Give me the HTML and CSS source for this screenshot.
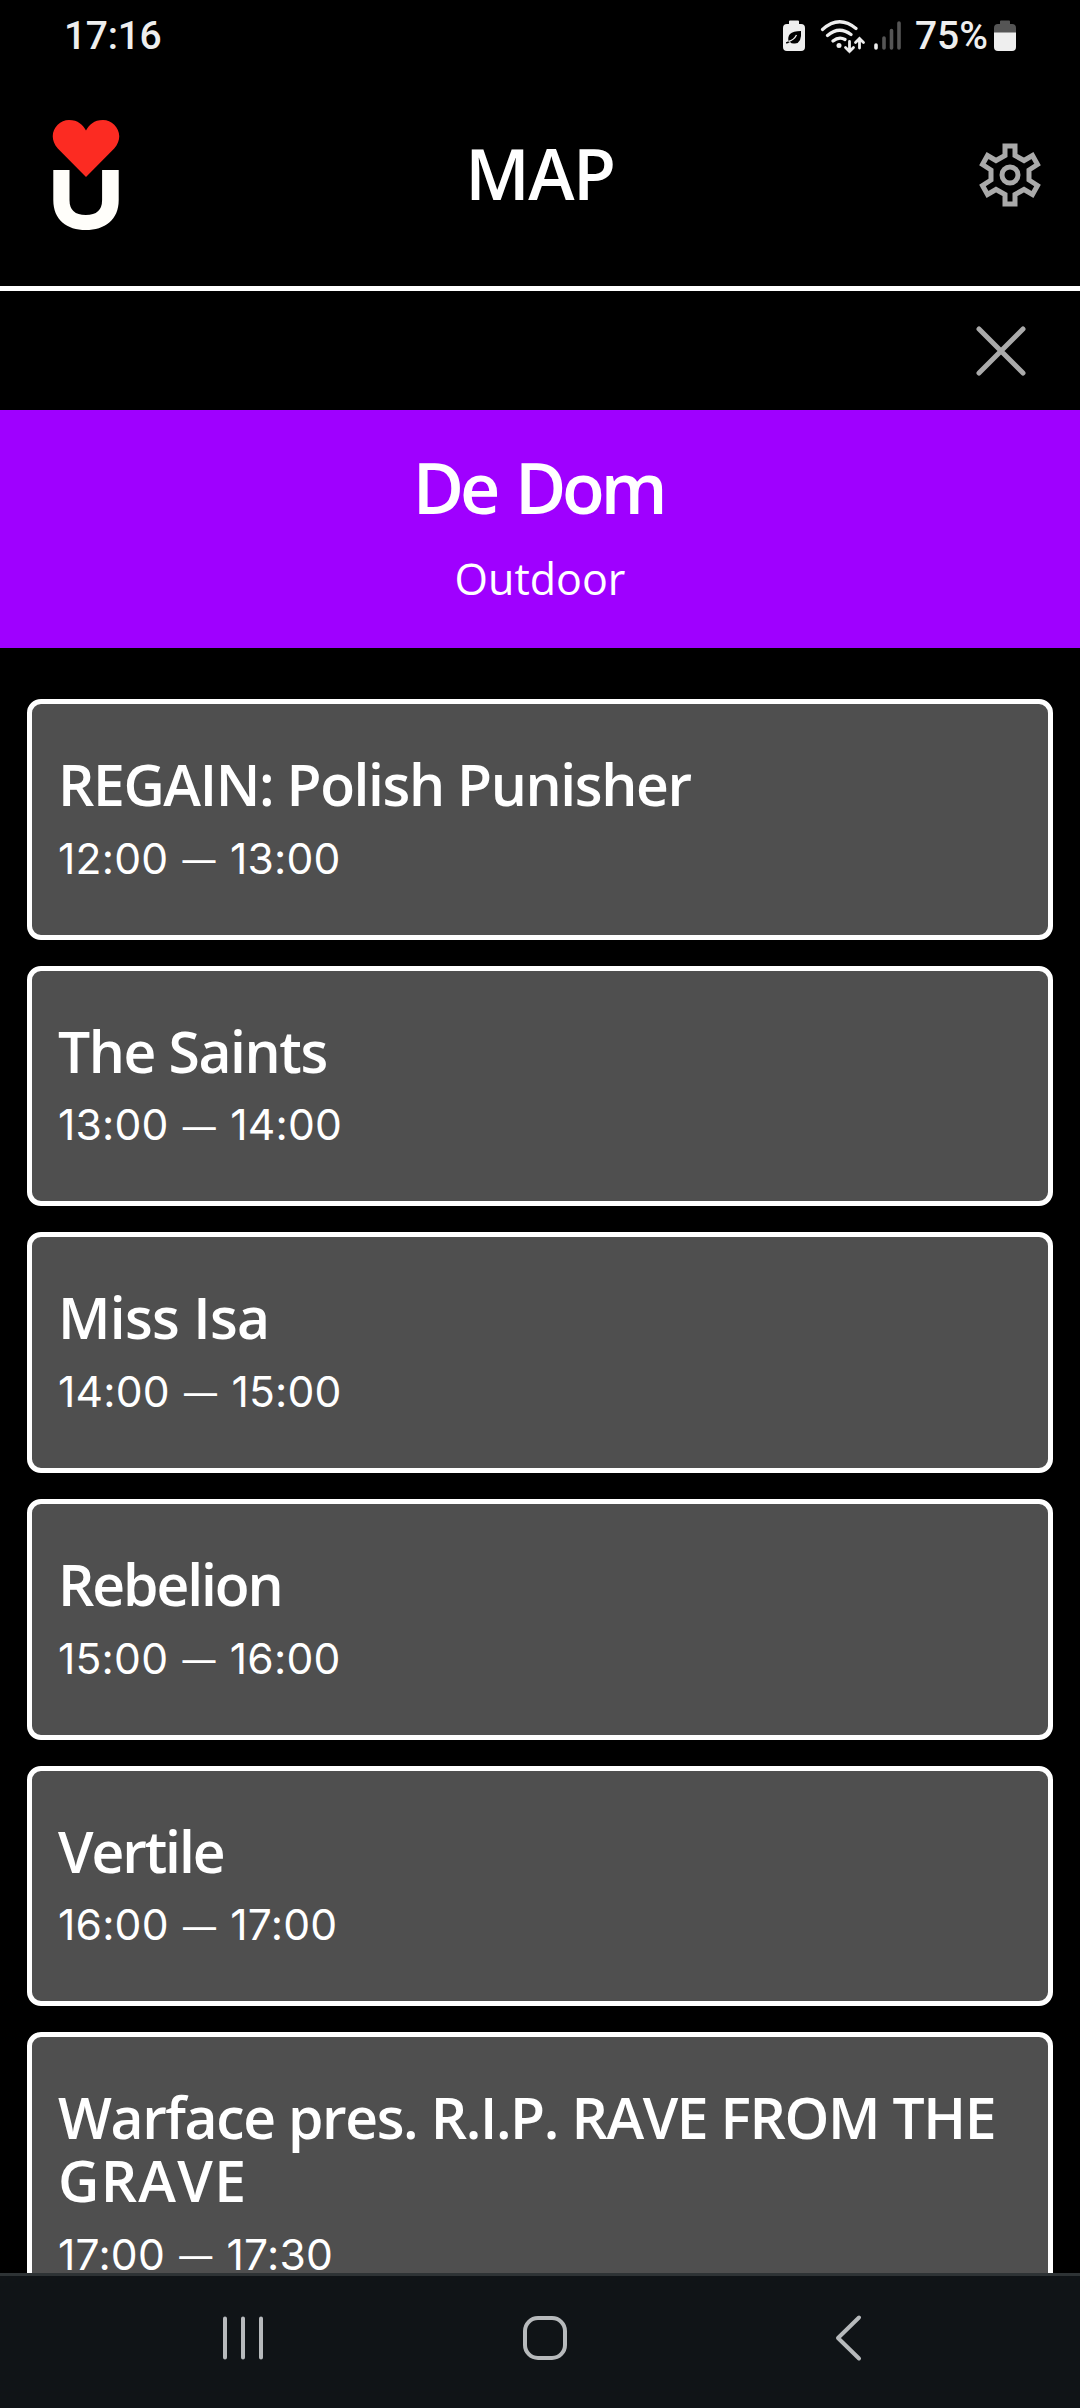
FILE: index.html
```html
<!DOCTYPE html>
<html lang="en">
<head>
<meta charset="utf-8">
<title>Map</title>
<link rel="stylesheet" href="styles.css">
</head>
<body>
<div class="screen">
  <div class="status">
    <span class="clock">17:16</span>
    <div class="status-icons">
      <svg class="saver" width="22" height="32" viewBox="0 0 22 32"><path fill="#eee" d="M6 1.5Q6 .5 7 .5h8q1 0 1 1V4h2q4 0 4 4v19q0 4-4 4H4q-4 0-4-4V8q0-4 4-4h2z"/><path fill="#000" d="M18 11q1 12-6 12.500-3.500.5-5-1.500-2 1.500-4 1.500v-1.300q1.500-.2 2.500-1.200Q4.500 17 7 14q3-3 11-3z"/><path stroke="#eee" stroke-width="1.300" fill="none" d="M5.500 21.500Q11 20 13.500 15"/></svg>
      <svg class="wifi" width="46" height="36" viewBox="0 0 46 36"><g fill="none" stroke="#eee" stroke-width="3.200" stroke-linecap="round"><path d="M2.500 11.500Q19-3.500 36 10.500M7.500 17.500Q19 7.500 31 16.500M13 23Q19 18 25 21.500"/><path stroke-width="2.800" d="M29.500 23.500v10M25.500 29.500l4 4 4-4M39.500 30v-9.500M35.500 24.500l4-4 4 4"/></g><circle cx="19" cy="27.500" r="2.500" fill="#eee"/></svg>
      <svg class="signal" width="27" height="30" viewBox="0 0 27 30"><g stroke-width="3.600" stroke-linecap="round"><path stroke="#eee" d="M2 24v3"/><path stroke="#555" d="M10 17v10M17.500 9.500V27M25 2v25"/></g></svg>
      <span class="percent">75%</span>
      <svg class="battery" width="22" height="32" viewBox="0 0 22 32"><path fill="#555" d="M6 1.500Q6 .5 7 .5h8q1 0 1 1V4h2q4 0 4 4v5H0V8q0-4 4-4h2z"/><path fill="#eee" d="M0 12.500h22V27q0 4-4 4H4q-4 0-4-4z"/></svg>
    </div>
  </div>
  <header class="header">
    <svg class="logo" width="68" height="112" viewBox="0 0 68 112"><path fill="#fffefa" d="M1.300 51h16.200v30q0 15 16.300 15t16.300-15V51h16.600v30c0 20-14 30-32.900 30S1.300 101 1.300 81z"/><path fill="#fc2b22" d="M34 58 5.800 29.500C-6 16 5 1 17 1 26 1 31 6 34 11.500 37 6 42 1 51 1 63 1 74 16 62.200 29.500z"/></svg>
    <h1 class="title">MAP</h1>
    <svg class="gear" width="64" height="66" viewBox="-32 -33 64 66"><g fill="none" stroke="#aaa" stroke-width="5"><circle r="8"/><path d="M-5-29H5V-19.500L14-14.500 22.500-19.500 27.500-10.500 19-5V5L27.500 10.500 22.500 19.500 14 14.500 5 19.500V29H-5V19.500L-14 14.500-22.500 19.500-27.500 10.500-19 5V-5L-27.500-10.500-22.500-19.500-14-14.500-5-19.500z"/></g></svg>
  </header>
  <div class="closebar">
    <svg width="50" height="50" viewBox="0 0 50 50"><path stroke="#aaa" stroke-width="5" stroke-linecap="round" d="M3 3l44 44M47 3 3 47"/></svg>
  </div>
  <section class="stage">
    <h2 class="stage-name">De Dom</h2>
    <p class="stage-place">Outdoor</p>
  </section>
  <main class="list">
    <article class="card"><h3 class="act">REGAIN: Polish Punisher</h3><p class="time">12:00 <span class="dash">—</span> 13:00</p></article>
    <article class="card"><h3 class="act">The Saints</h3><p class="time">13:00 <span class="dash">—</span> 14:00</p></article>
    <article class="card"><h3 class="act loose">Miss Isa</h3><p class="time">14:00 <span class="dash">—</span> 15:00</p></article>
    <article class="card"><h3 class="act tight">Rebelion</h3><p class="time">15:00 <span class="dash">—</span> 16:00</p></article>
    <article class="card"><h3 class="act tight">Vertile</h3><p class="time">16:00 <span class="dash">—</span> 17:00</p></article>
    <article class="card"><h3 class="act">Warface pres. R.I.P. RAVE FROM THE <span class="wide">GRAVE</span></h3><p class="time">17:00 <span class="dash">—</span> 17:30</p></article>
  </main>
  <nav class="nav">
    <svg class="recents" width="42" height="46" viewBox="0 0 42 46"><path stroke="#b7babc" stroke-width="4" stroke-linecap="round" d="M3 3.500v39M21 3.500v39M39 3.500v39"/></svg>
    <svg class="home" width="46" height="46" viewBox="0 0 46 46"><rect x="3" y="3" width="40" height="40" rx="13" fill="none" stroke="#b7babc" stroke-width="4"/></svg>
    <svg class="back" width="28" height="48" viewBox="0 0 28 48"><path fill="none" stroke="#b7babc" stroke-width="4" stroke-linecap="round" stroke-linejoin="round" d="M25 3.500 4 24l21 20.500"/></svg>
  </nav>
</div>
</body>
</html>
```

FILE: styles.css
```css
* { box-sizing: border-box; }
body { margin: 0; background: #000; }
h1, h2, h3, p { margin: 0; }
svg { display: block; flex: none; }
.screen { width: 1080px; height: 2408px; overflow: hidden; display: flex; flex-direction: column; background: #000; color: #fff; font-family: "Open Sans", "Noto Sans", sans-serif; }
.status { flex: none; height: 72px; padding: 0 64px; display: flex; justify-content: space-between; align-items: center; color: #eee; font: 500 39px/70px Roboto, sans-serif; }
.clock { letter-spacing: -0.3px; }
.status-icons { display: flex; align-items: center; }
.wifi { margin-left: 15px; }
.signal { margin-left: 8px; }
.percent { margin-left: 14px; margin-right: 6px; }
.header { flex: none; height: 219px; border-bottom: 5px solid #fff; padding: 0 38px 8px; display: grid; grid-template-columns: 1fr auto 1fr; align-items: center; }
.logo { margin-left: 14px; }
.gear { justify-self: end; }
.title, .stage-name { font-weight: 650; font-size: 70px; line-height: 80px; }
.title { letter-spacing: -1.500px; padding-bottom: 4px; }
.closebar { flex: none; height: 119px; padding: 0 54px; display: flex; justify-content: flex-end; align-items: center; }
.stage { flex: none; height: 238px; background: #9f00ff; padding-top: 37px; text-align: center; }
.stage-name { letter-spacing: -4.200px; word-spacing: 5px; padding-right: 4px; }
.stage-place { font-size: 43px; line-height: 60px; margin-top: 22px; }
.list { flex: 1; min-height: 0; overflow: hidden; padding: 51px 27px 0; display: flex; flex-direction: column; gap: 26px; }
.card { flex: none; min-height: 240.700px; background: #4f4f4f; border: 5px solid #fff; border-radius: 14px; padding: 49px 26px; }
.act { font-size: 57px; line-height: 63px; font-weight: 650; letter-spacing: -1.400px; }
.loose { letter-spacing: -0.700px; }
.tight { letter-spacing: -2.100px; }
.wide { letter-spacing: 1.300px; }
.time { font-family: Inter, sans-serif; font-size: 42.600px; line-height: 50px; margin-top: 17.500px; letter-spacing: 0.200px; }
.dash { font-size: 33px; line-height: 1; margin: 0 2px; vertical-align: 1.500px; }
.nav { flex: none; height: 135px; background: #101417; border-top: 3px solid #2e3335; padding: 0 218px 8px 222px; display: flex; justify-content: space-between; align-items: center; }
.home { margin-right: 8px; }
```
